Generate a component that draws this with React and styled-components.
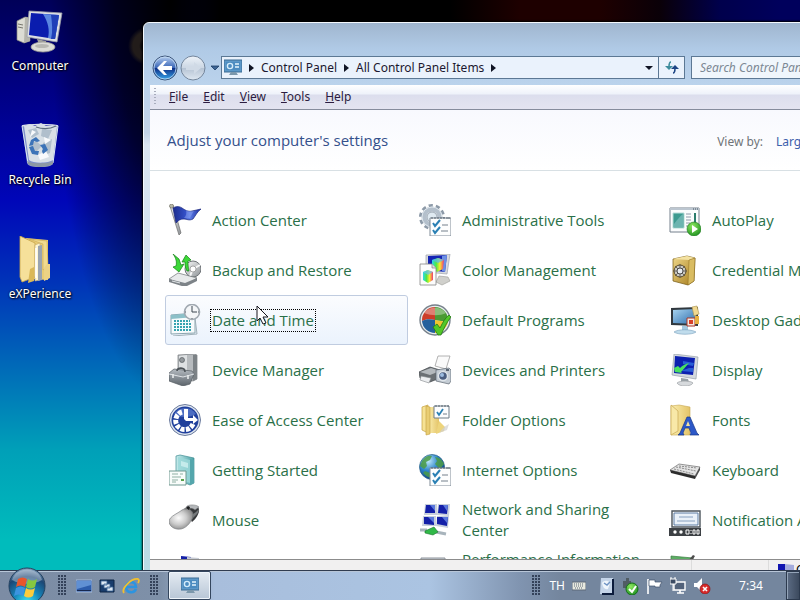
import React from "react";
import styled, { createGlobalStyle } from "styled-components";

const GlobalStyle = createGlobalStyle`
  * {
    box-sizing: border-box;
  }

  body {
    margin: 0;
    overflow: hidden;
    font-family: "Noto Sans", "Open Sans", sans-serif;
    font-size: 12px;
  }

  button,
  input,
  select {
    margin: 0;
    padding: 0;
    border: 0;
    background: none;
    font: inherit;
    color: inherit;
  }

  a {
    color: inherit;
    text-decoration: none;
  }
`;

/* gradients shared by every icon */
const Gradients = () => (
  <HiddenSvg aria-hidden="true">
    <defs>
      <linearGradient id="metal" x1="0" y1="0" x2="1" y2="1">
        <stop offset="0" stopColor="#fafafa" />
        <stop offset="1" stopColor="#8d9296" />
      </linearGradient>
      <radialGradient id="mouseBody" cx="0.4" cy="0.45" r="0.65">
        <stop offset="0" stopColor="#fcfcfc" />
        <stop offset="0.5" stopColor="#cccccc" />
        <stop offset="1" stopColor="#808080" />
      </radialGradient>
      <linearGradient id="darkMetal" x1="0" y1="0" x2="0" y2="1">
        <stop offset="0" stopColor="#b4bac0" />
        <stop offset="1" stopColor="#5c646b" />
      </linearGradient>
      <linearGradient id="folder" x1="0" y1="0" x2="1" y2="0">
        <stop offset="0" stopColor="#fbeeb0" />
        <stop offset="1" stopColor="#e4c468" />
      </linearGradient>
      <linearGradient id="gold" x1="0" y1="0" x2="1" y2="1">
        <stop offset="0" stopColor="#efd88a" />
        <stop offset="1" stopColor="#a67c1c" />
      </linearGradient>
      <linearGradient id="flagBlue" x1="0" y1="0" x2="1" y2="0">
        <stop offset="0" stopColor="#1c2c8c" />
        <stop offset="0.45" stopColor="#3450c8" />
        <stop offset="0.6" stopColor="#5c7ce4" />
        <stop offset="1" stopColor="#1c2ca0" />
      </linearGradient>
      <linearGradient id="teal" x1="0" y1="0" x2="1" y2="0">
        <stop offset="0" stopColor="#c8ecec" />
        <stop offset="1" stopColor="#4ba3a8" />
      </linearGradient>
      <linearGradient id="skyScreen" x1="0" y1="0" x2="1" y2="1">
        <stop offset="0" stopColor="#a8d4f0" />
        <stop offset="1" stopColor="#2c6cac" />
      </linearGradient>
      <linearGradient id="rainbow" x1="0" y1="0" x2="1" y2="0">
        <stop offset="0" stopColor="#28d8f0" />
        <stop offset="0.35" stopColor="#50e840" />
        <stop offset="0.65" stopColor="#f8ea30" />
        <stop offset="1" stopColor="#f03870" />
      </linearGradient>
      <radialGradient id="globe" cx="0.35" cy="0.25" r="0.8">
        <stop offset="0" stopColor="#c4ecfc" />
        <stop offset="0.5" stopColor="#2e86cc" />
        <stop offset="1" stopColor="#0c3878" />
      </radialGradient>
      <radialGradient id="orb" cx="0.5" cy="0.95" r="0.95">
        <stop offset="0" stopColor="#3ce4f4" />
        <stop offset="0.4" stopColor="#1684b8" />
        <stop offset="0.75" stopColor="#1c4674" />
        <stop offset="1" stopColor="#8aa6c2" />
      </radialGradient>
      <radialGradient id="greenBall" cx="0.4" cy="0.3" r="0.8">
        <stop offset="0" stopColor="#8ee860" />
        <stop offset="1" stopColor="#168a1c" />
      </radialGradient>
      <linearGradient id="back" x1="0" y1="0" x2="0" y2="1">
        <stop offset="0" stopColor="#b8d0f0" />
        <stop offset="0.48" stopColor="#3c68b8" />
        <stop offset="0.5" stopColor="#0c2c84" />
        <stop offset="1" stopColor="#38a8ec" />
      </linearGradient>
      <linearGradient id="forward" x1="0" y1="0" x2="0" y2="1">
        <stop offset="0" stopColor="#eef3f9" />
        <stop offset="0.48" stopColor="#ccd7e4" />
        <stop offset="0.52" stopColor="#b6c4d4" />
        <stop offset="1" stopColor="#dfe8f2" />
      </linearGradient>
    </defs>
  </HiddenSvg>
);

const Checklist = () => (
  <g>
    <path d="M11 14h21v18H11z" fill="#fdfefe" stroke="#7f8a96" />
    <path d="M13 13v2M16 13v2M19 13v2M22 13v2M25 13v2M28 13v2M30 13v2" stroke="#5a6672" />
    <path d="M14 19l2 3 5-6M14 26l2 3 5-6" fill="none" stroke="#2a80b4" strokeWidth="2" />
    <path d="M23 21h6M22 27h7" stroke="#74808c" />
  </g>
);

const icons = {
  action: (
    <g>
      <path d="M1 2l3-1 8 28-2 2z" fill="url(#metal)" stroke="#6c6c6c" strokeWidth="0.7" />
      <circle cx="2.5" cy="2" r="2" fill="#b8b8a8" stroke="#6a6a5a" strokeWidth="0.6" />
      <path d="M4 4c3-2 6-2 9 0s6 4 10 3l9-2c-4 3-5 6-8 10-4 2-6 0-9 0-4 0-5 1-8 4z" fill="url(#flagBlue)" stroke="#18257c" strokeWidth="0.7" />
      <path d="M17 6c3 2 6 1 8 1-2 3-3 5-4 7-3 1-4 0-6 0 2-2 3-5 2-8z" fill="#8ca4f4" opacity="0.5" />
    </g>
  ),
  admin: (
    <g>
      <circle cx="13" cy="13" r="11" fill="none" stroke="#8d9aa8" strokeWidth="4" strokeDasharray="4 2.9" />
      <circle cx="13" cy="13" r="8" fill="none" stroke="#b4c0cc" strokeWidth="5" />
      <circle cx="13" cy="13" r="10" fill="none" stroke="#e0e8ee" strokeWidth="1" />
      <circle cx="13" cy="13" r="5" fill="#dfeaf2" stroke="#7c8a98" strokeWidth="0.7" />
      <Checklist />
    </g>
  ),
  autoplay: (
    <g>
      <path d="M1 4h29v24H1z" fill="#fbfcfd" stroke="#75808c" />
      <path d="M1 4h29v2H1z" fill="#bcc6d0" />
      <path d="M24 5h1M26 5h1M28 5h1" stroke="#40505e" />
      <path d="M4 9h11v15H4z" fill="#3d9a90" stroke="#b6dcd8" />
      <path d="M5 20c4-5 6-8 9-10v13H5z" fill="#6cb4b0" />
      <path d="M17 10h5M17 13h5M17 16h5M17 19h4M17 22h3" stroke="#8e9aa8" />
      <path d="M26 9v10" stroke="#2c7c6c" strokeWidth="2" />
      <circle cx="25" cy="25" r="7" fill="url(#greenBall)" stroke="#1c7a1c" strokeWidth="0.6" />
      <path d="M23 21l6 4-6 4z" fill="#fff" />
    </g>
  ),
  backup: (
    <g>
      <circle cx="24" cy="15" r="8" fill="url(#metal)" stroke="#6f7478" />
      <path d="M24 15l7-4M24 15l-3 7" stroke="#f8f8f8" strokeWidth="2" />
      <circle cx="24" cy="15" r="3" fill="#fff" stroke="#868686" strokeWidth="0.7" />
      <path d="M0 25l9-6 19 5-12 8z" fill="#e8eaeb" stroke="#6d7276" strokeWidth="0.7" />
      <path d="M0 25l16 4 12-5v3l-12 6-16-5z" fill="#7d8388" />
      <path d="M3 27l8 2" stroke="#e0e4e6" />
      <path d="M4 0l6 5 2 6 3-1-5 8-6-5 3-1C8 8 7 4 4 0z" fill="#3cd838" stroke="#178018" strokeWidth="0.7" />
      <path d="M18 17c-2-4-2-6-2-9l-3 0 4-7 5 5-3 1c0 4 0 6 1 10z" fill="#3cd838" stroke="#178018" strokeWidth="0.7" />
    </g>
  ),
  color: (
    <g>
      <path d="M7 1l24-1-3 20-21-2z" fill="#d8dadf" stroke="#9fa3aa" strokeWidth="0.7" />
      <path d="M9 2l19-1-2 17-17-2z" fill="#1424b4" />
      <path d="M23 2l5-1-2 17-3-1z" fill="#6c90e4" />
      <path d="M13 6l6-2 6 2-1 9-6 3-5-3z" fill="url(#rainbow)" />
      <path d="M13 6l6-2 6 2-6 3z" fill="#58b8f8" opacity="0.7" />
      <path d="M20 22l9 1 2 4-8 4-6-3z" fill="#d0d0cc" stroke="#9a9a96" strokeWidth="0.6" />
      <path d="M1 10h12l4 4v17H1z" fill="#fcfcfc" stroke="#858585" strokeWidth="0.8" />
      <path d="M13 10v4h4" fill="#dedede" stroke="#858585" strokeWidth="0.7" />
      <path d="M4 18l5-2 5 2v8l-5 3-5-3z" fill="url(#rainbow)" />
      <path d="M4 18l5-2 5 2-5 3z" fill="#68c0f8" opacity="0.7" />
    </g>
  ),
  credential: (
    <g>
      <path d="M4 5l14-3 8 2-1 23-6 4-15-4z" fill="url(#gold)" stroke="#735713" strokeWidth="0.7" />
      <path d="M4 5l14-3 8 2-6 2z" fill="#f4e2a2" />
      <path d="M20 6l6-2-1 23-6 4z" fill="#d9bc62" stroke="#8c6c20" strokeWidth="0.5" />
      <circle cx="11" cy="17" r="6" fill="#c8c8c4" stroke="#55482a" />
      <path d="M11 10v14M4 17h14M6 12l10 10M16 12L6 22" stroke="#554e44" strokeWidth="0.8" />
      <circle cx="11" cy="17" r="3" fill="#e8ecf0" stroke="#4c4c4c" />
    </g>
  ),
  date: (
    <g>
      <path d="M2 11l24-2v20l-24 1z" fill="#f6fbfc" stroke="#8aa4ae" />
      <path d="M2 11l24-2v4L2 15z" fill="#8cc0c8" />
      <path d="M5 17h16M5 20h18M5 23h18M5 26h18" stroke="#37a4b0" strokeWidth="2" strokeDasharray="2 1" />
      <path d="M26 14l2 16-24 2" fill="none" stroke="#9fb0b8" />
      <circle cx="23" cy="8" r="7.5" fill="#f4f6f8" stroke="#a0a8b0" strokeWidth="1.6" />
      <path d="M23 2v6h5" fill="none" stroke="#3c4650" />
      <path d="M16 8h1M29 8h1M23 14v1" stroke="#59636c" />
    </g>
  ),
  defaults: (
    <g>
      <circle cx="16" cy="16" r="15" fill="#e8ecee" stroke="#76808a" strokeWidth="1.4" />
      <path d="M16 16V3A13 13 0 003 17c4-2 8-2 13-1z" fill="#cc3c28" />
      <path d="M16 16V3a13 13 0 0113 13c-4 2-8 1-13 0z" fill="#4a9a34" />
      <path d="M16 16v13A13 13 0 013 17c4-2 8-2 13-1z" fill="#24609c" />
      <path d="M16 16v13a13 13 0 0013-13c-4 2-8 1-13 0z" fill="#f0c430" />
      <path d="M5 9c4-6 16-8 22 0-6 3-14 3-22 0z" fill="#fff" opacity="0.35" />
      <path d="M14 23l4-3 3 4c3-6 5-10 9-13l2 2c-4 5-7 11-10 18h-3z" fill="#52c828" stroke="#237a14" strokeWidth="0.8" />
    </g>
  ),
  gadgets: (
    <g>
      <path d="M2 4l27-1v19L2 21z" fill="#30383e" />
      <path d="M4 6l23-1v15L4 19z" fill="url(#skyScreen)" />
      <path d="M13 22h6v4h-6z" fill="#a4c8e0" />
      <path d="M5 28c4-3 17-3 22 0-4 3-18 3-22 0z" fill="#c0dcec" stroke="#78a0bc" strokeWidth="0.6" />
      <path d="M23 3l5-1 2 8-5 2z" fill="#f0d890" stroke="#a8904c" strokeWidth="0.6" />
      <path d="M18 14h8v8h-8z" fill="#f4e8e4" stroke="#a83828" />
      <path d="M20 16h4v4h-4z" fill="#d84028" />
      <path d="M26 12h4v8h-4z" fill="#e8b040" />
    </g>
  ),
  device: (
    <g>
      <path d="M9 1l16-1 3 1v24l-4 2-15-3z" fill="#b7bbbe" stroke="#74797d" strokeWidth="0.7" />
      <path d="M24 1l4 0v24l-4 2z" fill="#7c8286" />
      <path d="M10 2l8-1v15l-8 1z" fill="#dee1e3" />
      <circle cx="13" cy="6" r="2.5" fill="#93989c" stroke="#565c60" strokeWidth="0.7" />
      <path d="M0 19l5-4 18 2 2 3-4 10-7 2-14-5z" fill="url(#darkMetal)" stroke="#555c62" strokeWidth="0.7" />
      <path d="M0 20l14 3 11-3" fill="none" stroke="#e0e4e6" />
      <path d="M8 17c0-4 8-4 8 1" fill="none" stroke="#4c5257" strokeWidth="1.6" />
      <path d="M4 20v4M19 21v4" stroke="#e8eaeb" strokeWidth="1.6" />
    </g>
  ),
  printers: (
    <g>
      <path d="M19 2l12 0-4 13-11-3z" fill="#fafafa" stroke="#a0a0a0" strokeWidth="0.8" />
      <path d="M0 18l11-5 10 3v8l-10 4-10-4z" fill="#6b7074" stroke="#3e4347" strokeWidth="0.7" />
      <path d="M1 18l11-4 9 3-10 4z" fill="#b4b9bd" />
      <path d="M2 22l10 2-2 5-9-3z" fill="#eceef0" stroke="#808488" strokeWidth="0.6" />
      <path d="M17 16l13-2 2 2v11l-2 3-13-3z" fill="#c4ccd4" stroke="#5c6670" strokeWidth="0.7" />
      <circle cx="24" cy="22" r="4.5" fill="#4a5e80" stroke="#dfe5ea" strokeWidth="1.4" />
      <circle cx="23" cy="21" r="2" fill="#9cbce0" />
      <path d="M27 16h3" stroke="#2c3848" strokeWidth="1.4" />
    </g>
  ),
  display: (
    <g>
      <path d="M5 0l24 3-2 22L3 21z" fill="#d4d9de" stroke="#98a2ac" strokeWidth="0.7" />
      <path d="M6 2l20 2-2 17-19-2z" fill="#0c20b0" />
      <path d="M14 7l11 2-1 3-10-2zM20 14l4 0v4l-12-1z" fill="#3c88f0" opacity="0.6" />
      <path d="M5 14l4-2 2 2c3-3 6-4 9-5-3 3-6 7-8 9l1 1-7-1z" fill="#48e060" />
      <path d="M12 24l7 1 1 3h-8z" fill="#9aa2a8" />
      <path d="M8 29c3-3 15-2 16 0-2 4-14 4-16 0z" fill="#d7dadd" stroke="#94989c" strokeWidth="0.6" />
    </g>
  ),
  access: (
    <g>
      <circle cx="16" cy="16" r="15.5" fill="#dfe6f0" stroke="#6a7a9c" />
      <circle cx="16" cy="16" r="13.5" fill="#20409c" />
      <path d="M5 10c5-8 17-8 22 0-7 4-15 4-22 0z" fill="#6a8cdc" opacity="0.6" />
      <path d="M13 8A9 9 0 1024 20" fill="none" stroke="#fff" strokeWidth="5" strokeDasharray="4 1.3" />
      <path d="M15 5h4v9h5v-3l5 5-5 4v-3h-7l-2-2z" fill="#fff" />
    </g>
  ),
  folderOptions: (
    <g>
      <path d="M3 3l6-2v28l-6-3z" fill="#f6e294" stroke="#c4a040" strokeWidth="0.7" />
      <path d="M9 3l11 0v26H9z" fill="url(#folder)" />
      <path d="M7 2l4 1v27l-4 1z" fill="#e9cd72" stroke="#c4a040" strokeWidth="0.6" />
      <path d="M20 17l6 6-1 4-8 3z" fill="#edd47c" />
      <path d="M25 23l5-3-2 6-8 3z" fill="#d0d0d0" opacity="0.7" />
      <path d="M15 2h15v12H15z" fill="#fcfdfe" stroke="#6f7c88" />
      <path d="M17 1v2M20 1v2M23 1v2M26 1v2M29 1v2" stroke="#44505c" strokeWidth="0.8" />
      <path d="M18 8l2 3 4-6" fill="none" stroke="#2a80b4" strokeWidth="1.8" />
      <path d="M24 10h4" stroke="#74808c" />
    </g>
  ),
  fonts: (
    <g>
      <path d="M2 2l8-1 11 2v28H2z" fill="url(#folder)" stroke="#c8a850" strokeWidth="0.6" />
      <path d="M2 1l7 6v20l-7 4z" fill="#f8e8a8" stroke="#c8a850" strokeWidth="0.7" />
      <path d="M9 31l2-2 7-16h3l7 16 2 2h-9l1-2-2-5h-4l-2 5 1 2z" fill="#2c58c8" stroke="#183888" strokeWidth="0.7" />
      <path d="M17 22l2-5 2 5z" fill="#f0e0a0" />
    </g>
  ),
  started: (
    <g>
      <path d="M7 2l4-1 14 3v25l-4 2-14-6z" fill="url(#teal)" stroke="#3f8c92" strokeWidth="0.7" />
      <path d="M9 3l12 3v23l-12-4z" fill="#9cd8da" opacity="0.8" />
      <path d="M21 5l4 1v23l-4 2z" fill="#54a6ac" />
      <path d="M12 7l7 2v5l-7-2z" fill="#d0f0f0" opacity="0.8" />
      <path d="M0 17h17v14H0z" fill="#f8fcfa" stroke="#6e9890" />
      <path d="M3 20h6M3 23h9M3 26h6M11 20h3M3 28h4" stroke="#90b0a4" />
      <path d="M12 26h3" stroke="#58a048" strokeWidth="2" />
    </g>
  ),
  internet: (
    <g>
      <circle cx="13" cy="13" r="12.5" fill="url(#globe)" stroke="#245c84" strokeWidth="0.7" />
      <path d="M3 7c3-5 7-6 10-5l-2 4-4 2 1 4-3 3-4-3zM16 3c4 0 7 3 9 7l-4 5-5-5 2-3zM6 17l5 2 1 5c-4-1-6-3-8-5z" fill="#4c9c44" opacity="0.85" />
      <Checklist />
    </g>
  ),
  keyboard: (
    <g>
      <path d="M1 16l9-6 21 3-5 9z" fill="#e4e4e4" stroke="#6c6c6c" strokeWidth="0.7" />
      <path d="M1 16l25 6v3L2 19z" fill="#2c2c2c" />
      <path d="M26 22l5-9v3l-5 9z" fill="#4c4c4c" />
      <path d="M7 13l20 4M5 15l20 5M10 12l18 2" stroke="#747474" strokeWidth="0.8" strokeDasharray="2 1" />
    </g>
  ),
  mouse: (
    <g>
      <path d="M15 5c3-3 12-4 14-2 3 4-1 11-6 15z" fill="#36383a" />
      <path d="M0 17C1 12 8 10 13 6c5-3 11 0 11 5 0 5-6 13-12 14C5 26 0 22 0 17z" fill="url(#mouseBody)" stroke="#7c7f82" strokeWidth="0.7" />
      <path d="M16 5l2-3c4-2 10-1 12 1l-4 3c-2-2-5-2-10-1z" fill="#b4b7ba" stroke="#6c6e70" strokeWidth="0.5" />
      <path d="M17 4l2-2 2 1-1 3z" fill="#1d1f20" />
      <path d="M24 10c2-1 4-3 6-5 0 2-1 4-2 5l-5 5z" fill="#74787a" />
    </g>
  ),
  network: (
    <g>
      <path d="M6 0h12v11H5zM19 0h12l-1 12-12-1zM4 12h13v10H3zM18 12h12l-1 12-12-2z" fill="#c8d0dc" />
      <path d="M7 1h9v8l-10 0zM20 1h9l-1 9-9-1zM5 13h10v8l-10-1zM18 13h11l-1 9-10-2z" fill="#1420a8" />
      <path d="M11 1h5v6zM24 1h5l-1 6zM9 13h6v6zM23 13h6l-1 6z" fill="#5a78dc" />
      <path d="M1 26h7M17 28l10 2" stroke="#a8b4bc" strokeWidth="3" />
      <path d="M6 27l9-4 4 5-5 3-8-2z" fill="#30b848" stroke="#187428" strokeWidth="0.6" />
    </g>
  ),
  notification: (
    <g>
      <path d="M3 7h28v16H3z" fill="#fdfdfd" stroke="#4c545c" strokeWidth="1.4" />
      <path d="M5 9h24v12H5z" fill="#eaf1f9" stroke="#5c7ca4" />
      <path d="M10 13h14M8 17h18" stroke="#86a0c0" />
      <path d="M0 24h32v8H0z" fill="#3c4044" />
      <circle cx="6" cy="28" r="1.7" fill="#fff" />
      <circle cx="12" cy="28" r="1.7" fill="#fff" />
      <path d="M17 26h3v4h-3zM24 26h2v4h-2zM28 26h2v4h-2z" fill="none" stroke="#fff" />
      <path d="M22 26v1M22 29v1" stroke="#fff" />
    </g>
  ),
  parental: (
    <g>
      <path d="M12 2l10 1v16l-10-1z" fill="#1420a8" />
      <path d="M18 3l12 1-1 14-11-1z" fill="#c8ccd4" />
    </g>
  ),
  performance: (
    <g>
      <path d="M2 4h24v22H2z" fill="#cfd4da" stroke="#8a9098" />
      <path d="M6 10h16v10H6z" fill="#4c7cc0" />
    </g>
  ),
  personalization: (
    <g>
      <path d="M2 2l22 2v18l-22-2z" fill="#5cae64" stroke="#3c7c44" strokeWidth="0.7" />
      <path d="M18 8l6-7 2 1-5 8z" fill="#4c4c4c" />
    </g>
  ),
};

const items = [
  { icon: "action", label: "Action Center" },
  { icon: "admin", label: "Administrative Tools" },
  { icon: "autoplay", label: "AutoPlay" },
  { icon: "backup", label: "Backup and Restore" },
  { icon: "color", label: "Color Management" },
  { icon: "credential", label: "Credential Manager" },
  { icon: "date", label: "Date and Time", active: true },
  { icon: "defaults", label: "Default Programs" },
  { icon: "gadgets", label: "Desktop Gadgets" },
  { icon: "device", label: "Device Manager" },
  { icon: "printers", label: "Devices and Printers" },
  { icon: "display", label: "Display" },
  { icon: "access", label: "Ease of Access Center" },
  { icon: "folderOptions", label: "Folder Options" },
  { icon: "fonts", label: "Fonts" },
  { icon: "started", label: "Getting Started" },
  { icon: "internet", label: "Internet Options" },
  { icon: "keyboard", label: "Keyboard" },
  { icon: "mouse", label: "Mouse" },
  { icon: "network", label: "Network and Sharing Center" },
  { icon: "notification", label: "Notification Area Icons" },
  { icon: "parental", label: "Parental Controls" },
  { icon: "performance", label: "Performance Information and Tools" },
  { icon: "personalization", label: "Personalization" },
];

const menus = ["File", "Edit", "View", "Tools", "Help"];

const desktopIcons = [
  {
    label: "Computer",
    art: (
      <g>
        <path d="M1 13l8-4 5 1v23l-6 2-7-3z" fill="#dcdcd4" stroke="#86867e" strokeWidth="0.7" />
        <path d="M9 9l5 1v23l-6 2z" fill="#b4b4ac" />
        <path d="M2 16l5 1M2 19l5 1" stroke="#76766e" />
        <path d="M13 3l33 2-5 29-30-5z" fill="#dcdfe4" stroke="#9a9ea6" strokeWidth="0.8" />
        <path d="M15 5l28 2-4 24-26-4z" fill="#0a1cae" />
        <path d="M27 6l16 1-4 24-7-1c2-8 0-16-5-24z" fill="#5a86e0" />
        <path d="M35 7l8 0-4 24-4 0c2-8 1-16 0-24z" fill="#2040b8" />
        <path d="M21 31l9 2 1 5-8-1z" fill="#a4a49e" />
        <ellipse cx="27" cy="39" rx="12" ry="5" fill="#dcdcd6" stroke="#9a9a94" strokeWidth="0.8" />
        <ellipse cx="26" cy="38" rx="7" ry="2" fill="#b8b8b2" />
      </g>
    ),
  },
  {
    label: "Recycle Bin",
    art: (
      <g>
        <path d="M6 4h36l-5 37c-1 3-5 4-13 4s-12-1-13-4z" fill="#a8c0d8" opacity="0.75" />
        <path d="M8 4l6-2 5 2 6-3 5 3 7-1 4 2-4 33c-4 3-19 4-24 0z" fill="#d8e0e6" />
        <path d="M12 8l8-2 3 6-7 4zM26 7l10 1-4 9-7-3zM14 22l6-3 6 5-8 8zM27 21l9-4-2 14-8 3z" fill="#b0bfcc" />
        <path d="M16 8l4 2-6 5zM28 15l7 3-6 4zM22 33l8-4 3 6-9 3z" fill="#f8fafc" />
        <path d="M15 18l5-3 4 4-3 1-3-1-1 4-4 1zM13 25l4-1 2 5h4l-1 4-6-1zM24 23l5-1 3 6-5 4-1-3 1-2z" fill="#3c74b8" />
        <path d="M6 4c4-2 32-2 36 0" fill="none" stroke="#d8e0e8" strokeWidth="1.5" />
        <path d="M20 5c6 2 14 2 20-1" fill="none" stroke="#5c6c7c" strokeWidth="1.2" />
        <path d="M6 4l6 37c2 4 22 4 25 0l5-37" fill="none" stroke="#dce8f2" />
        <path d="M11 39c4 3 22 3 26 0v3c-4 4-22 4-25 0z" fill="#8c98a4" />
      </g>
    ),
  },
  {
    label: "eXPerience",
    art: (
      <g>
        <path d="M10 2l22 2v40l-18-1z" fill="#e8cc74" />
        <path d="M4 0l15 7v34l-13 5-2-5z" fill="#f6e09a" stroke="#c8a44c" strokeWidth="0.8" />
        <path d="M19 9l5-2v37l-5 1z" fill="#fdf6d4" stroke="#c4a868" strokeWidth="0.6" />
        <path d="M22 10l4-1v35l-4 1z" fill="#9aa4b0" />
        <path d="M13 3l18 2 1 26-5 3V8z" fill="#f0da90" stroke="#caa854" strokeWidth="0.6" />
        <path d="M31 28l3 0v14l-6 3V32z" fill="#ecd284" />
        <path d="M14 33l4-2v14l-6 2z" fill="#dab858" />
        <path d="M20 12v30" stroke="#fff" strokeWidth="1.6" />
      </g>
    ),
  },
];

const ControlPanelGlyph = () => (
  <g>
    <path d="M0 1h18v12H0z" fill="#5c98c8" stroke="#3c6c94" />
    <path d="M2 3h14v8H2z" fill="#4c8cc0" />
    <circle cx="6" cy="7" r="2.6" fill="none" stroke="#d4ecfa" strokeWidth="1.4" />
    <path d="M11 5h4M11 8h4" stroke="#e4f4fc" strokeWidth="1.4" />
    <path d="M7 13h5l2 3H5z" fill="#7c98ac" />
  </g>
);

function Toolbar() {
  return (
    <NavRow>
      <RoundButton aria-label="Back">
        <svg width="26" height="26" viewBox="0 0 26 26">
          <circle cx="13" cy="13" r="12" fill="url(#back)" stroke="#3c5478" />
          <circle cx="13" cy="13" r="11" fill="none" stroke="#c4dcf4" strokeWidth="0.8" />
          <path d="M5 13l7-7h3l-4 5h9v4h-9l4 5h-3z" fill="#fff" />
        </svg>
      </RoundButton>
      <RoundButton aria-label="Forward">
        <svg width="26" height="26" viewBox="0 0 26 26">
          <circle cx="13" cy="13" r="12" fill="url(#forward)" stroke="#74869c" />
          <path d="M21 13l-7-6v4H6v4h8v4z" fill="#d0dae6" />
        </svg>
      </RoundButton>
      <SmallArrow aria-label="Recent pages">
        <svg width="10" height="6" viewBox="0 0 10 6">
          <path d="M1 1h8L5 5z" fill="#3c6494" stroke="#1c3c64" strokeWidth="0.8" />
        </svg>
      </SmallArrow>
      <AddressBar>
        <svg width="18" height="17" viewBox="0 0 18 17">
          <ControlPanelGlyph />
        </svg>
        <Chevron />
        <Crumb>Control Panel</Crumb>
        <Chevron />
        <Crumb>All Control Panel Items</Crumb>
        <Chevron />
        <Spacer />
        <SmallArrow aria-label="Previous locations">
          <svg width="8" height="4" viewBox="0 0 8 4">
            <path d="M0 0h8L4 4z" fill="#101424" />
          </svg>
        </SmallArrow>
      </AddressBar>
      <Refresh aria-label="Refresh">
        <svg width="14" height="13" viewBox="0 0 14 13">
          <path d="M6 1C4 1 4 3 4 6" fill="none" stroke="#3c8c9c" strokeWidth="1.6" />
          <path d="M0 5h8L4 9z" fill="#3c8c9c" />
          <path d="M8 12c2 0 2-2 2-5" fill="none" stroke="#1c4484" strokeWidth="1.6" />
          <path d="M6 8h8l-4-4z" fill="#1c4484" />
        </svg>
      </Refresh>
      <Search type="text" aria-label="Search Control Panel" placeholder="Search Control Panel" />
    </NavRow>
  );
}

const Chevron = () => (
  <ChevronSvg width="5" height="8" viewBox="0 0 5 8">
    <path d="M0 0l5 4-5 4z" fill="#101424" />
  </ChevronSvg>
);

function ControlPanel() {
  return (
    <Window>
      <Toolbar />
      <Client>
        <MenuBar>
          <MenuGrip />
          {menus.map((name) => (
            <MenuButton key={name}>
              <u>{name[0]}</u>
              {name.slice(1)}
            </MenuButton>
          ))}
        </MenuBar>
        <Header>
          <h1>Adjust your computer's settings</h1>
          <ViewBy>
            <label htmlFor="view">View by:</label>
            <select id="view" defaultValue="Large icons">
              <option>Category</option>
              <option>Large icons</option>
              <option>Small icons</option>
            </select>
          </ViewBy>
        </Header>
        <ItemGrid>
          {items.map((item) => (
            <Item key={item.label} href="#" $active={item.active}>
              <ItemIcon viewBox="0 0 32 32">{icons[item.icon]}</ItemIcon>
              <ItemLabel $active={item.active}>{item.label}</ItemLabel>
            </Item>
          ))}
        </ItemGrid>
        <StatusBar>
          <StatusMain />
          <StatusCell />
          <StatusZone>
            <svg width="18" height="16" viewBox="0 0 18 16">
              <path d="M2 1h7v7H2z" fill="#1014b0" />
              <path d="M9 1l9 1v8H9z" fill="#a4acdc" />
            </svg>
            Computer
          </StatusZone>
        </StatusBar>
      </Client>
    </Window>
  );
}

function Taskbar() {
  return (
    <Bar>
      <StartButton aria-label="Start">
        <svg width="38" height="38" viewBox="0 0 38 38">
          <circle cx="19" cy="19" r="18" fill="url(#orb)" stroke="#22405e" />
          <path d="M4 13c4-14 26-14 30 0-9 5-21 5-30 0z" fill="#fff" opacity="0.35" />
          <path d="M10 12c3-2 6-2 9 0l-2 8c-3-2-6-2-9 0z" fill="#e8562c" />
          <path d="M20 12c3 2 6 2 9 0l-2 8c-3 2-6 2-9 0z" fill="#86c840" />
          <path d="M8 21c3-2 6-2 9 0l-2 8c-3-2-6-2-9 0z" fill="#3c94e0" />
          <path d="M18 21c3 2 6 2 9 0l-2 8c-3 2-6 2-9 0z" fill="#fccc3c" />
        </svg>
      </StartButton>
      <Grip />
      <QuickLaunch>
        <button aria-label="Show desktop">
          <svg width="16" height="16" viewBox="0 0 16 16">
            <path d="M0 2h16v12H0z" fill="#2c5cac" stroke="#a8bcd8" />
            <path d="M1 3h14v4L1 11z" fill="#6090d4" />
            <path d="M1 12h14v1H1z" fill="#162850" />
          </svg>
        </button>
        <button aria-label="Switch between windows">
          <svg width="16" height="16" viewBox="0 0 16 16">
            <path d="M1 2h14v12H1z" fill="#183c6c" stroke="#0c2444" />
            <path d="M2 3h6v4H2zM5 6h6v4H5zM8 9h6v4H8z" fill="#dce8f4" stroke="#3c6494" strokeWidth="0.8" />
          </svg>
        </button>
        <button aria-label="Internet Explorer">
          <svg width="18" height="18" viewBox="0 0 18 18">
            <path d="M14 12c-2 5-10 4-10-2s10-7 10 0H5" fill="none" stroke="#2c94e0" strokeWidth="2.6" />
            <path d="M2 16C-1 12 9 1 16 2c2 1 0 4 0 4" fill="none" stroke="#f0c030" strokeWidth="1.8" />
          </svg>
        </button>
      </QuickLaunch>
      <Grip />
      <TaskButton aria-label="All Control Panel Items">
        <svg width="18" height="17" viewBox="0 0 18 17">
          <ControlPanelGlyph />
        </svg>
      </TaskButton>
      <Spacer />
      <Grip />
      <Tray>
        <Language>TH</Language>
        <svg width="14" height="16" viewBox="0 0 14 16">
          <path d="M0 4h14v8H0z" fill="#e8eae0" stroke="#5c6878" />
          <path d="M2 6h10M2 8h10M3 10h8" stroke="#5c6878" strokeDasharray="1 1" />
        </svg>
        <TrayIcons>
          <svg width="16" height="18" viewBox="0 0 16 18">
            <path d="M2 1h12v14l-2 2H1z" fill="#c4d4e8" />
            <path d="M14 2v15H3" fill="none" stroke="#0c1c3c" strokeWidth="2" />
            <path d="M3 6c2-3 6-3 8 0l-2 6c-3 1-5-1-6-6z" fill="#f0f6fc" />
            <path d="M5 6l3 2 3-3" fill="none" stroke="#7094c4" strokeWidth="1.5" />
          </svg>
          <svg width="17" height="18" viewBox="0 0 17 18">
            <path d="M1 4h8v7H1zM4 1h3v3H4z" fill="#505c64" />
            <circle cx="10" cy="12" r="6" fill="url(#greenBall)" stroke="#147018" />
            <path d="M7 12l3 3 4-6" fill="none" stroke="#fff" strokeWidth="2" />
          </svg>
          <svg width="17" height="16" viewBox="0 0 17 16">
            <path d="M2 1v15" stroke="#fff" strokeWidth="1.6" />
            <path d="M3 2h6v2h7l-2 3v2H9V8H3z" fill="#fff" stroke="#40506a" strokeWidth="0.7" />
          </svg>
          <svg width="16" height="17" viewBox="0 0 16 17">
            <path d="M4 5h11v8H4z" fill="#52627a" stroke="#fff" strokeWidth="1.4" />
            <path d="M7 16h7M10 13v3" stroke="#fff" strokeWidth="1.6" />
            <path d="M0 2h6v5H0z" fill="#3c4c64" stroke="#fff" />
            <path d="M1 0v2M5 0v2M3 7v7" stroke="#fff" />
          </svg>
          <svg width="18" height="17" viewBox="0 0 18 17">
            <path d="M1 6h3l5-5v14l-5-5H1z" fill="#fff" />
            <circle cx="12" cy="12" r="5" fill="#d82c2c" stroke="#8c1414" strokeWidth="0.7" />
            <path d="M10 10l4 4M14 10l-4 4" stroke="#fff" strokeWidth="1.6" />
          </svg>
        </TrayIcons>
      </Tray>
      <Clock>7:34</Clock>
      <PeekButton aria-label="Peek at desktop" />
    </Bar>
  );
}

export default function App() {
  return (
    <Screen>
      <GlobalStyle />
      <Gradients />
      <Desktop>
        <IconColumn>
          {desktopIcons.map((icon) => (
            <DesktopIcon key={icon.label} href="#">
              <svg width="48" height="48" viewBox="0 0 48 48">
                {icon.art}
              </svg>
              <span>{icon.label}</span>
            </DesktopIcon>
          ))}
        </IconColumn>
        <ControlPanel />
        <Pointer width="13" height="20" viewBox="0 0 13 20">
          <path d="M1 1v15l3-3 3 6 3-1-3-6h5z" fill="#fff" stroke="#16161e" />
        </Pointer>
      </Desktop>
      <Taskbar />
    </Screen>
  );
}

const HiddenSvg = styled.svg`
  position: absolute;
  width: 0;
  height: 0;
`;

const Screen = styled.div`
  display: flex;
  flex-direction: column;
  height: 100vh;
  overflow: hidden;
`;

const Desktop = styled.main`
  position: relative;
  flex: 1;
  min-height: 0;
  overflow: hidden;
  background:
    radial-gradient(circle at 147px 46px, #0c0a0a 0 5px, #221c1a 8px 14px, transparent 19px),
    linear-gradient(90deg, transparent 180px, #000 220px 450px, #1e0000 520px 600px, #0a0008 660px, #00004c 720px, #00005c 780px) 0 0 / 100% 24px no-repeat,
    radial-gradient(ellipse 120px 400px at 170px 0, #000 0, rgba(0, 0, 0, 0.7) 45%, transparent),
    linear-gradient(180deg, #000058 0, #000084 90px, #0006b8 200px, #0032b8 280px, #006cb8 370px, #00a0b8 450px, #00bcbc 540px);
`;

const IconColumn = styled.nav`
  display: flex;
  flex-direction: column;
  gap: 47px;
  width: 80px;
  padding-top: 8px;
`;

const DesktopIcon = styled.a`
  display: flex;
  flex-direction: column;
  align-items: center;
  gap: 1px;
  color: #fff;
  line-height: 18px;
  white-space: nowrap;
  text-shadow: 1px 1px 2px #000, 0 0 2px #000;
`;

const Window = styled.section`
  position: absolute;
  top: 22px;
  left: 143px;
  right: -160px;
  bottom: -20px;
  display: flex;
  flex-direction: column;
  padding: 32px 6px 0;
  border: 1px solid #f4f8fc;
  border-radius: 6px 6px 0 0;
  box-shadow: 0 0 2px 1px #000;
  background: linear-gradient(180deg, #a0b6cf 0, #b0cae6 26px, #bbd3ec 62px, #c3d3e6 110px, #dbe6f1 122px, #c4d9ea 380px, #b8dce4 100%);
`;

const NavRow = styled.div`
  display: flex;
  align-items: center;
  height: 25px;
  margin-bottom: 5px;
  padding-left: 2px;
`;

const RoundButton = styled.button`
  flex: none;
  display: flex;
  width: 26px;
  height: 26px;
  margin-right: 2px;
`;

const SmallArrow = styled.button`
  display: flex;
  align-items: center;
  justify-content: center;
  width: 13px;
  height: 20px;
`;

const AddressBar = styled.div`
  flex: 1;
  display: flex;
  align-items: center;
  height: 23px;
  padding: 0 3px 0 2px;
  border: 1px solid #5c7894;
  background: #eaf2fc;
  color: #1c1830;
`;

const Crumb = styled.button`
  white-space: nowrap;
`;

const ChevronSvg = styled.svg`
  flex: none;
  margin: 0 7px;
`;

const Spacer = styled.div`
  flex: 1;
`;

const Refresh = styled.button`
  display: flex;
  align-items: center;
  justify-content: center;
  width: 26px;
  height: 23px;
  margin-right: 6px;
  border: 1px solid #5c7894;
  border-left: 0;
  background: #eaf2fc;
`;

const Search = styled.input`
  width: 262px;
  height: 23px;
  padding: 0 8px;
  border: 1px solid #5c7894;
  background: #f0f6fc;

  &::placeholder {
    color: #7c8894;
    font-style: italic;
    opacity: 1;
  }
`;

const Client = styled.div`
  flex: 1;
  min-height: 0;
  display: flex;
  flex-direction: column;
  background: #fff;
`;

const MenuBar = styled.nav`
  flex: none;
  display: flex;
  align-items: center;
  gap: 15px;
  height: 25px;
  padding-left: 4px;
  border-bottom: 1px solid #868c9c;
  background: linear-gradient(180deg, #fff 0, #eef2fa 9px, #dcdeed 10px, #e4e4f0 100%);
  color: #2c1c40;
`;

const MenuGrip = styled.span`
  width: 2px;
  height: 18px;
  margin-right: -2px;
  background: repeating-linear-gradient(180deg, #a8acbc 0 1px, transparent 1px 3px);
`;

const MenuButton = styled.button`
  line-height: 18px;
`;

const Header = styled.header`
  flex: none;
  display: flex;
  align-items: center;
  justify-content: space-between;
  height: 61px;
  padding: 0 97px 0 17px;
  border-bottom: 1px solid #d8e0e4;
  background: linear-gradient(180deg, #f8f9fe, #fff);

  h1 {
    margin: 0;
    font-family: "Open Sans", "Noto Sans", sans-serif;
    font-size: 15px;
    font-weight: 400;
    line-height: 21px;
    color: #34508c;
  }
`;

const ViewBy = styled.div`
  display: flex;
  align-items: center;
  gap: 13px;
  line-height: 18px;
  padding-top: 3px;
  color: #707478;

  select {
    width: 80px;
    appearance: none;
    color: #3c60ac;
  }
`;

const ItemGrid = styled.div`
  flex: 1;
  min-height: 0;
  overflow: hidden;
  display: grid;
  grid-template-columns: repeat(auto-fill, 243px);
  grid-auto-rows: 50px;
  align-content: start;
  column-gap: 7px;
  padding: 24px 15px 0;
`;

const Item = styled.a`
  display: flex;
  align-items: center;
  gap: 9px;
  padding: 0 3px;
  border: 1px solid ${(props) => (props.$active ? "#c0cce0" : "transparent")};
  border-radius: 3px;
  background: ${(props) =>
    props.$active ? "linear-gradient(180deg, #fbfcfe, #ebf3fd)" : "none"};
  color: #2a7048;
`;

const ItemIcon = styled.svg`
  flex: none;
  width: 32px;
  height: 32px;
`;

const ItemLabel = styled.span`
  padding: 0 1px;
  border: 1px dotted ${(props) => (props.$active ? "#000" : "transparent")};
  font-family: "Open Sans", "Noto Sans", sans-serif;
  font-size: 15px;
  line-height: 21px;
`;

const StatusBar = styled.footer`
  flex: none;
  display: flex;
  height: 30px;
  border-top: 1px solid #8c8c8c;
  background: #f1f0f0;
`;

const StatusMain = styled.div`
  flex: 1;
`;

const StatusCell = styled.div`
  width: 78px;
  border: solid #dcdcdc;
  border-width: 0 1px;
`;

const StatusZone = styled.div`
  display: flex;
  gap: 2px;
  width: 184px;
  padding: 3px 7px;
  line-height: 14px;
`;

const Pointer = styled.svg`
  position: absolute;
  left: 256px;
  top: 305px;
`;

const Bar = styled.footer`
  position: relative;
  flex: none;
  display: flex;
  align-items: center;
  height: 30px;
  border-top: 1px solid #303c50;
  box-shadow: inset 0 1px 0 #b8c6d8;
  background: linear-gradient(90deg, #7c8ca4 0, #7e90a8 160px, #a8bedc 215px, #abc4e2 430px, #8094b0 520px, #74869e 560px, #74869e 100%);
  color: #fff;
`;

const StartButton = styled.button`
  display: flex;
  width: 38px;
  height: 38px;
  margin: 0 12px 0 8px;
`;

const Grip = styled.span`
  flex: none;
  width: 9px;
  height: 21px;
  background: radial-gradient(circle at 1px 1px, #34425a 1px, transparent 1px) 0 0 / 3px 3px;
`;

const QuickLaunch = styled.div`
  display: flex;
  align-items: center;
  gap: 7px;
  width: 83px;
  padding-left: 9px;

  button {
    display: flex;
  }
`;

const TaskButton = styled.button`
  display: flex;
  align-items: center;
  justify-content: center;
  width: 43px;
  height: 29px;
  margin-left: 9px;
  border: 1px solid #34465e;
  border-radius: 2px;
  box-shadow: inset 0 0 0 1px #eef4fa;
  background: linear-gradient(180deg, #e4ebf2, #b8c6d6);
`;

const Tray = styled.div`
  display: flex;
  align-items: center;
  gap: 7px;
  margin-left: 8px;
`;

const TrayIcons = styled.div`
  display: flex;
  align-items: center;
  gap: 7px;
  padding-left: 6px;
`;

const Language = styled.span`
  line-height: 18px;
`;

const Clock = styled.time`
  width: 75px;
  padding-left: 5px;
  text-align: center;
  line-height: 18px;
`;

const PeekButton = styled.button`
  width: 14px;
  height: 29px;
  border: 1px solid #2c3a4e;
  box-shadow: inset 1px 1px 0 #94a4b8;
  background: linear-gradient(90deg, #5c6c84, #3c4a5e);
`;
